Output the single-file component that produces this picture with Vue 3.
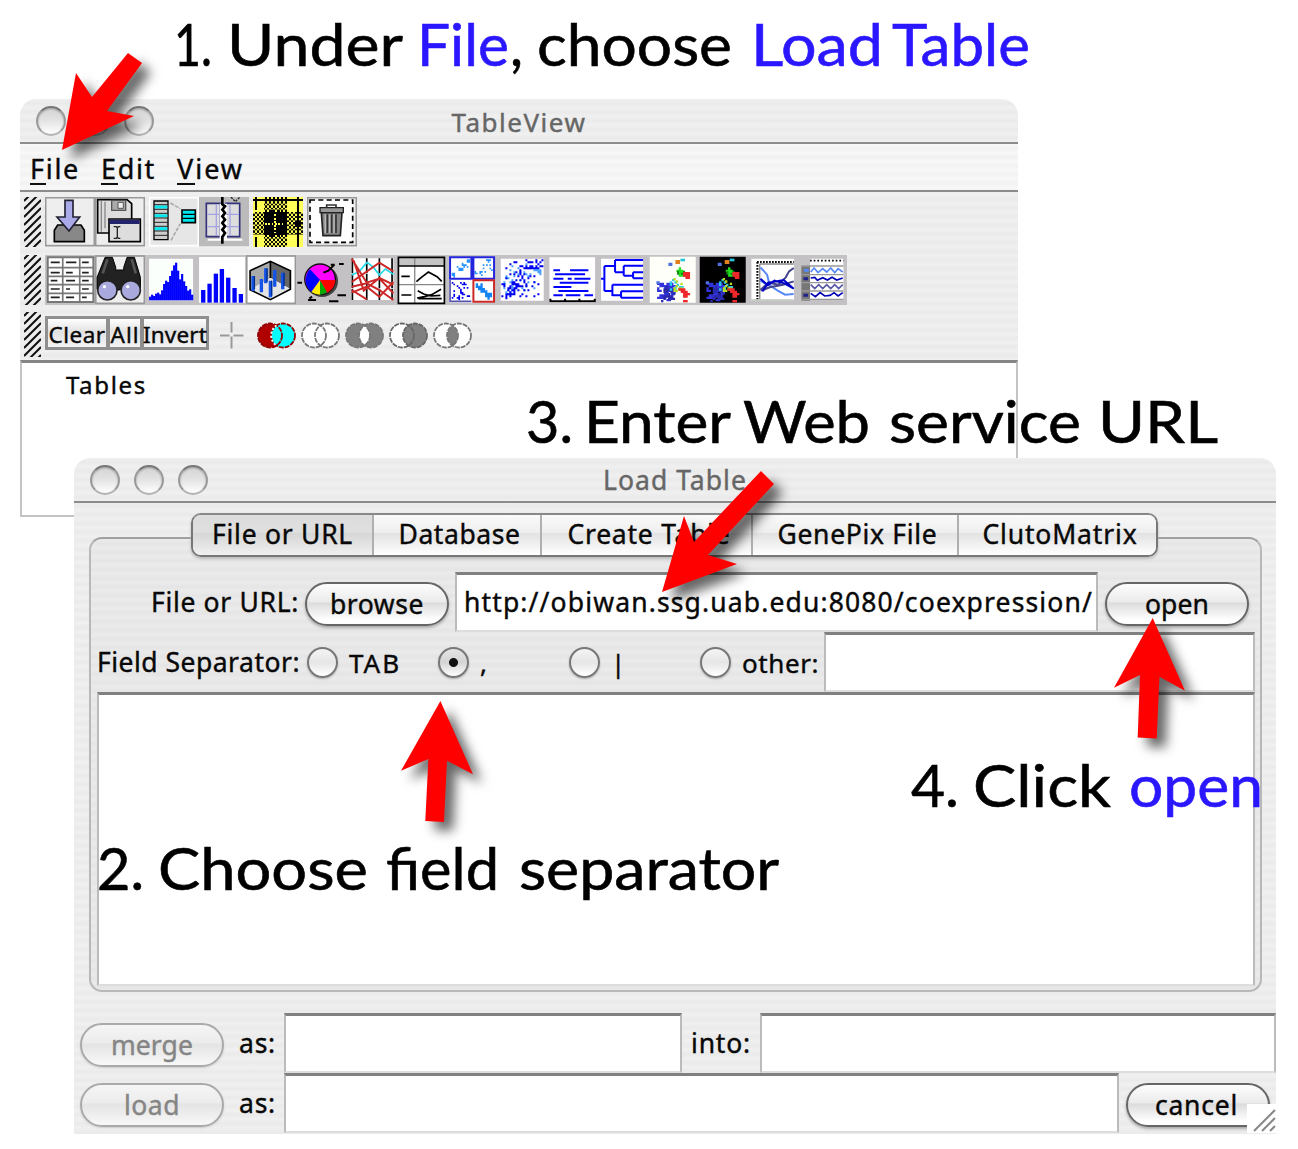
<script setup>
// Spreads the letters of a label so that it fills the given width.
const vFit = {
  mounted(el, { value }) {
    const natural = el.getBoundingClientRect().width
    const n = el.textContent.length
    el.style.letterSpacing = ((value - natural) / n).toFixed(3) + 'px'
  },
}

const tabs = [
  { label: 'File or URL', width: 179, text: 141, active: true },
  { label: 'Database', width: 168, text: 122 },
  { label: 'Create Table', width: 211, text: 163 },
  { label: 'GenePix File', width: 206, text: 160 },
  { label: 'ClutoMatrix', width: 199, text: 155 },
]

const captions = [
  { y: 66, words: [['1.', 174, 38], ['Under', 227, 176], ['File', 417, 92, 1], [',', 510, 13], ['choose', 537, 195], ['Load', 751, 132, 1], ['Table', 892, 138, 1]] },
  { y: 443, words: [['3.', 526, 47], ['Enter', 584, 147], ['Web', 743, 127], ['service', 889, 192], ['URL', 1098, 120]] },
  { y: 890, words: [['2.', 97, 47], ['Choose', 158, 210], ['field', 386, 113], ['separator', 519, 260]] },
  { y: 807, words: [['4.', 911, 48], ['Click', 973, 138], ['open', 1129, 134, 1]] },
]

const arrows = [
  '62,150 76,73 92,97 128,53 142,63 107,111 134,116',
  '662,592 684,516 694,542 761,471 774,484 708,555 737,564',
  '440.4,701 401,770.7 428.4,759 425.3,821 444,822 447,760.7 473,774.3',
  '1152.7,618 1114,687.7 1140,675 1137.7,737.5 1156.7,738.5 1159.5,676.7 1185,690.7',
]

function hatch(height) {
  let d = ''
  for (let y = 4; y < height + 16; y += 8) d += `M0 ${y}L17 ${y - 17}`
  return d
}

let seed = 11
const rnd = () => {
  seed = (seed * 16807) % 2147483647
  return seed / 2147483647
}
function dots(n, x, y, w, h, diagonal, size = 6) {
  let d = ''
  for (let i = 0; i < n; i++) {
    const a = rnd()
    let b = rnd()
    if (diagonal) {
      b = (diagonal > 0 ? 1 - a : a) + (rnd() + rnd() - 1) * Math.abs(diagonal)
      if (b < 0 || b > 1) continue
    }
    const px = x + Math.round((a * (w - size)) / size) * size
    const py = y + Math.round((b * (h - size)) / size) * size
    d += `M${px} ${py}h${size}v${size}h${-size}z`
  }
  return d
}
const scatterA = dots(30, 484, 28, 56, 54, 0.3, 5)
const scatterB = dots(32, 552, 28, 56, 54, 0.7, 5)
const scatterC = dots(34, 484, 96, 56, 54, 0, 5)
const scatterD = dots(80, 556, 100, 48, 46, -0.35, 7)
const cloudDark = dots(150, 634, 28, 126, 120, 0.8, 6)
const cloudLight = dots(60, 634, 28, 126, 120, 0.7, 6)
const blobs = [
  ['#3333dd', dots(75, 274, 98, 56, 54, 0, 7)],
  ['#2a2aae', dots(25, 286, 108, 42, 48, 0, 7)],
  ['#28c8e8', dots(17, 312, 80, 42, 44, 0, 7)],
  ['#b8dc20', dots(12, 316, 84, 36, 46, 0, 7)],
  ['#22e022', dots(24, 332, 52, 28, 30, 0, 7)],
  ['#128a12', dots(6, 334, 62, 26, 22, 0, 6)],
  ['#ee2828', dots(13, 352, 66, 24, 22, 0, 7)],
  ['#ee2828', dots(24, 338, 108, 34, 34, -0.5, 7)],
  ['#e08020', 'M329 30h14v12h-14z'],
  ['#28c8d8', 'M344 26h14v8h-14z'],
  ['#5070dd', 'M308 38h12v10h-12zM272 94h10v8h-10z'],
  ['#ee2828', 'M352 150h14v7h-14z'],
]
const bars = [[402, 140], [408, 134], [414, 138], [420, 131], [426, 128], [432, 133], [438, 121], [444, 102], [450, 92], [456, 96], [462, 78], [468, 62], [474, 46], [480, 38], [486, 62], [492, 88], [498, 72], [504, 94], [510, 108], [516, 122], [522, 118], [528, 134]]
const columns = [[558, 120], [577, 101], [596, 71], [614, 57], [633, 83], [652, 114], [671, 132]]
const venns = [
  { l: '#b00000', r: '#00ffff', m: '#00ffff', s: '#900000' },
  { l: '#fff', r: '#fff', m: '#fff', s: '#777' },
  { l: '#808080', r: '#808080', m: '#fff', s: '#777' },
  { l: '#fff', r: '#808080', m: '#808080', s: '#666' },
  { l: '#fff', r: '#fff', m: '#808080', s: '#777' },
]
</script>

<template>
  <main class="desktop">
    <section class="window tableview">
      <header class="titlebar">
        <div class="lights"><i></i><i></i><i></i></div>
        <span v-fit="135" class="title">TableView</span>
      </header>
      <nav class="menubar">
        <span v-fit="50"><u>F</u>ile</span>
        <span v-fit="55"><u>E</u>dit</span>
        <span v-fit="67"><u>V</u>iew</span>
      </nav>
      <div class="tools first">
        <svg class="grip" width="17" height="50"><path :d="hatch(50)" /></svg>
        <svg class="ico" viewBox="90 20 150 150">
          <rect x="92" y="22" width="146" height="144" fill="#eee" stroke="#999" stroke-width="5" />
          <path d="M128 104h70l10 16v34h-90v-34z" fill="#888" stroke="#000" stroke-width="5" />
          <path d="M150 30h24v50h20l-32 42-36-42h24z" fill="#aaaae8" stroke="#223" stroke-width="5" />
        </svg>
        <svg class="ico" viewBox="240 20 150 150">
          <rect x="242" y="22" width="146" height="144" fill="#eee" stroke="#999" stroke-width="5" />
          <path d="M248 28h88l14 12v88h-102z" fill="#ddd" stroke="#000" stroke-width="5" />
          <path d="M259 32v92M270 34v80" stroke="#888" stroke-width="4" />
          <path d="M290 30h42v30h-42z" fill="#aaa" stroke="#555" stroke-width="4" />
          <path d="M309 36h16v18h-16z" fill="#eee" stroke="#555" stroke-width="3" />
          <path d="M282 86h94v68h-94z" fill="#ddd" stroke="#000" stroke-width="5" />
          <path d="M284 88h90v13h-90z" fill="#23236b" />
          <path d="M296 109h8l3 4 3-4h6M307 113v26M296 144h8l3-4 3 4h6" fill="none" stroke="#222" stroke-width="4" />
        </svg>
        <svg class="ico gap" viewBox="400 20 150 150">
          <rect x="402" y="22" width="146" height="144" fill="#e6e6e6" stroke="#fff" stroke-width="5" />
          <path d="M415 32h42v116h-42z" fill="#ccc" stroke="#000" stroke-width="4" />
          <path d="M417 50h38M417 76h38M417 115h38" stroke="#00e8ee" stroke-width="9" />
          <path d="M415 43h42M415 57h42M415 69h42M415 83h42M415 96h42M415 108h42M415 122h42M415 135h42" stroke="#222" stroke-width="3" />
          <path d="M499 59h40v38h-40z" fill="#00e8ee" stroke="#000" stroke-width="5" />
          <path d="M499 72h40M499 84h40" stroke="#000" stroke-width="4" />
          <path d="M464 38l30 17M466 150l28-50" stroke="#aaa" stroke-width="5" stroke-dasharray="12 4" />
        </svg>
        <svg class="ico" viewBox="552 20 150 150">
          <path d="M552 20h150v148h-150z" fill="#bbb" />
          <path d="M574 39h42v100h-42zM632 39h42v100h-42z" fill="#ddd" stroke="#33337c" stroke-width="5" />
          <path d="M614 40h22v105h-22z" fill="#fff" />
          <path d="M578 145h104v6h-104z" fill="#fff" />
          <path d="M604 42v95M645 42v95M577 72h36M577 109h36M634 72h38M634 109h38" stroke="#a4a4e4" stroke-width="4" />
          <path d="M622 20v22l8 6-8 10 8 10-8 10 8 10-8 10 8 10-8 10 8 10-8 12v20" fill="none" stroke="#000" stroke-width="8" />
          <path d="M648 20l13 14 14-14" fill="none" stroke="#222" stroke-width="4" stroke-dasharray="7 3" />
        </svg>
        <svg class="ico gap" viewBox="714 20 150 144" preserveAspectRatio="none" shape-rendering="crispEdges">
          <defs>
            <pattern id="weave" x="714" y="20" width="12" height="12" patternUnits="userSpaceOnUse">
              <path d="M0 0h6v6h6v6h-6v-6h-6z" />
            </pattern>
          </defs>
          <path d="M714 20h150v144h-150z" fill="#ffff5a" />
          <path d="M714 64h150v66h-150zM746 20h70v144h-70z" fill="url(#weave)" />
          <path d="M746 64h22v-6h8v6h10v-6h8v6h22v66h-22v6h-8v-6h-10v6h-8v-6h-22z" />
          <path d="M714 28h150M722 20v36M722 134v30M849 20v144" stroke="#000" stroke-width="6" />
          <path d="M839 88h18v18h-18z" />
          <path d="M750 97h60M780 70v56" stroke="#ffff5a" stroke-width="5" stroke-dasharray="5 5" />
        </svg>
        <svg class="ico gap" viewBox="877 20 150 150">
          <rect x="879" y="22" width="146" height="144" fill="#eee" stroke="#999" stroke-width="5" />
          <rect x="886" y="29" width="128" height="127" fill="#fff" stroke="#000" stroke-width="5" stroke-dasharray="15 10" />
          <path d="M920 66h62l-5 70h-52z" fill="#888" stroke="#222" stroke-width="5" />
          <path d="M916 52h70v15h-70z" fill="#999" stroke="#222" stroke-width="4" />
          <path d="M936 52v-8h28v8M938 72v56M951 72v56M964 72v56" fill="none" stroke="#333" stroke-width="5" />
          <path d="M932 72v56M945 72v56M958 72v56" stroke="#bbb" stroke-width="4" />
        </svg>
      </div>

      <div class="tools second">
        <svg class="grip" width="17" height="50"><path :d="hatch(50)" /></svg>
        <div class="strip">
          <svg viewBox="90 15 150 150">
            <path d="M98 22h137v134h-137z" fill="#fff" stroke="#777" stroke-width="6" />
            <path d="M143 22v134M194 22v134M98 53h137M98 79h137M98 104h137M98 130h137" stroke="#777" stroke-width="5" />
            <path d="M107 37h27M153 37h31M201 37h20M107 68h27M153 68h20M201 68h20M107 92h20M153 92h27M201 92h20M107 117h27M153 117h12M201 117h20M107 142h27M153 142h24M201 142h14" stroke="#222" stroke-width="5" />
          </svg>
          <svg viewBox="240 15 150 150">
            <rect x="242" y="18" width="146" height="142" fill="#eee" stroke="#999" stroke-width="5" />
            <path d="M270 22h22l10 30v8h24v-8l10-30h22l18 60v36l-16-8h-36l-10 10h-14l-10-10h-30l-14 8v-36z" fill="#222" stroke="#000" stroke-width="3" />
            <path d="M263 70l14-42M350 28l12 42" stroke="#555" stroke-width="8" />
            <circle cx="277" cy="121" r="29" fill="#a9a9de" stroke="#222" stroke-width="5" />
            <circle cx="347" cy="121" r="29" fill="#a9a9de" stroke="#222" stroke-width="5" />
            <circle cx="268" cy="110" r="5" fill="#fff" /><circle cx="338" cy="110" r="5" fill="#fff" />
          </svg>
          <svg viewBox="390 15 150 150">
            <path d="M402 26h132v126h-132z" fill="#fbfffb" />
            <path v-for="b in bars" :key="b[0]" :d="`M${b[0]} ${b[1]}h6.5V151h-6.5z`" fill="#00f" />
          </svg>
          <svg viewBox="540 15 150 150">
            <path d="M552 21h138v137h-138z" fill="#fff" />
            <path v-for="b in columns" :key="b[0]" :d="`M${b[0]} ${b[1]}h13V158h-13z`" fill="#00f" />
          </svg>
          <svg viewBox="698 15 150 150">
            <rect x="700" y="18" width="146" height="142" fill="#fff" stroke="#999" stroke-width="5" />
            <path d="M710 62l61-28v50l-61 35z" fill="#aaa" /><path d="M771 34l60 28v55l-60-33z" fill="#666" />
            <path d="M710 119l61-35 60 33-60 32z" fill="#e4e4e4" />
            <path d="M710 62l61-28 60 28v56l-60 31-61-30zM771 34v50" fill="none" stroke="#000" stroke-width="5" />
            <path d="M719 78v45M757 55v45M744 87v40M784 60v50M808 68v50M771 92v50" stroke="#1454e8" stroke-width="10" />
            <path d="M723 78v40M761 55v40M775 92v45M812 68v40" stroke="#002c8c" stroke-width="4" />
          </svg>
          <svg viewBox="16 15 150 150">
            <circle cx="94" cy="93" r="48" fill="#444" />
            <circle cx="88" cy="88" r="46" fill="#f0f" stroke="#111" stroke-width="4" />
            <path d="M88 90L58 58a46 46 0 0 0 4 68z" fill="#00f" />
            <path d="M88 90l-26 36a46 46 0 0 0 26 8z" fill="#fe0" /><path d="M88 90v44a46 46 0 0 0 22-8z" fill="#0a0" />
            <path d="M88 90l22 38a46 46 0 0 0 24-38z" fill="#f00" />
            <path d="M20 98h14M145 42h14M120 44h12M52 150h24M115 154h28M140 136h26M98 68l15-6 18-18M56 146l8-6" fill="none" stroke="#000" stroke-width="6" />
          </svg>
          <svg viewBox="167 15 150 150">
            <path d="M182 25h127v125h-127z" fill="#fff" />
            <path d="M186 25v125M229 25v125M267 25v125M305 25v125" stroke="#000" stroke-width="5" stroke-dasharray="44 2" />
            <path d="M184 75l22-10 24-28 20 16 17 22 18-18 24 16" fill="none" stroke="#20d8e8" stroke-width="5" />
            <path d="M184 26l45 72 38-12 42 44M184 96l83-58 42 26M190 32l30 90 47-38 42 20M184 110l45-10 38 20 42 30M184 128l45-18 38 30 42-44M184 120l45 28" fill="none" stroke="#cc2828" stroke-width="6" />
          </svg>
          <svg viewBox="317 15 150 150">
            <path d="M324 22h138v138h-138z" fill="#fff" /><path d="M324 22h138v25h-138z" fill="#c4c4c4" />
            <path d="M373 22v138M324 104h138" stroke="#888" stroke-width="4" />
            <path d="M324 22h138v138h-138zM324 48h138M333 79h25M333 135h30" fill="none" stroke="#000" stroke-width="5" />
            <path d="M378 95l14-12 22-17 26 14 14 14M382 122l18 10 22 6 28-2 M380 144l22-4 22-6 28-16M384 146h70" fill="none" stroke="#000" stroke-width="5" />
          </svg>
          <svg viewBox="467 15 150 150">
            <path d="M476 20h137v138h-137z" fill="#fff" />
            <path :d="scatterA" fill="#2892ff" /><path :d="scatterB" fill="#2892ff" /><path :d="scatterC" fill="#00e" /><path :d="scatterD" fill="#1484f4" />
            <path d="M479 90v64h64" fill="none" stroke="#5555aa" stroke-width="5" />
            <path d="M479 22h64v64h-64zM549 22h62v64h-62z" fill="none" stroke="#2424dd" stroke-width="6" />
            <path d="M549 91h62v64h-62z" fill="none" stroke="#cc2828" stroke-width="6" />
          </svg>
          <svg viewBox="618 15 150 150">
            <path d="M632 26h129v126h-129z" fill="#fff" /><path :d="cloudLight" fill="#45a0ff" /><path :d="cloudDark" fill="#0000f0" />
          </svg>
          <svg viewBox="-57 15 150 150">
            <path d="M-47 22h137v136h-137z" fill="#fff" />
            <path d="M-35 61h20M15 61h55M-30 73h90M-35 86h30M8 86h12M28 86h48M-16 98h86M-35 111h54M-20 123h90M-35 136h28M2 136h44M58 136h26" stroke="#00f" stroke-width="6" />
            <path d="M-47 154h136v-8M-44 146v8M0 146v8M43 146v8" fill="none" stroke="#000" stroke-width="6" />
          </svg>
          <svg viewBox="93 15 150 150">
            <path d="M108 26h126v126h-126z" fill="#fff" />
            <path d="M108 86h10M118 48v75M118 48h32M150 30v37M150 30h84M150 67h26M176 47v30M176 47h58M176 77h28M204 67v18M204 67h30M204 85h30M118 123h24M142 104v34M142 104h92M142 136h26M168 124v19M168 124h66M168 143h66" fill="none" stroke="#00f" stroke-width="6" />
          </svg>
          <svg viewBox="244 15 150 150">
            <path d="M252 20h138v138h-138z" fill="#fffffa" />
            <path v-for="(b, i) in blobs" :key="i" :d="b[1]" :fill="b[0]" />
          </svg>
          <svg viewBox="394 15 150 150">
            <path d="M402 20h138v138h-138z" />
            <g transform="translate(148 0)"><path v-for="(b, i) in blobs" :key="i" :d="b[1]" :fill="b[0]" /></g>
          </svg>
          <svg viewBox="544 15 150 150">
            <path d="M557 26h128v126h-128z" fill="#fff" /><path d="M582 42h102M582 42v106" stroke="#888" stroke-width="4" />
            <path d="M574 36h110M575 36v112" stroke="#000" stroke-width="6" stroke-dasharray="5 4" />
            <path d="M584 52l20 22 8 32 24 16 22 12 26-2M584 92l20 12" fill="none" stroke="#5888f8" stroke-width="6" />
            <path d="M584 120l24-22 30 6 22-22 10-18 14-10M586 122l26-10 40-8 32-10" fill="none" stroke="#44448c" stroke-width="6" />
            <path d="M584 86l22 20 20-14 30 8 28 16M590 124l18-26 46-8 30 26" fill="none" stroke="#0000c8" stroke-width="6" />
            <path d="M557 150h127" stroke="#9aaa9a" stroke-width="3" />
          </svg>
          <svg viewBox="695 15 150 150">
            <path d="M734 26h100v124h-100z" fill="#fff" /><path d="M708 48h26v104h-26z" fill="#777" />
            <path d="M716 61h14" stroke="#5888f8" stroke-width="9" /><path d="M714 86h14M714 136h14" stroke="#22228c" stroke-width="9" />
            <path d="M734 32h100" stroke="#000" stroke-width="5" stroke-dasharray="5 6" />
            <path d="M708 48h126M708 74h126M708 98h126M708 123h126M708 148h126" stroke="#999" stroke-width="4" />
            <path d="M736 66l10-12 12 14 14-12 12 10 12-12 12 14 10-12 14 10" fill="none" stroke="#5888f8" stroke-width="5" />
            <path d="M736 84l12-2 8 9 16-8 14 7 14-8 14 8 18-6M736 130l14 10 14-12 14 10 16-2 12-8 12 10 14-10" fill="none" stroke="#0000b8" stroke-width="5" />
            <path d="M736 104l12 12 12-12 12 12 12-12 12 12 12-12 12 12 12-12" fill="none" stroke="#5858a4" stroke-width="5" />
          </svg>
        </div>
      </div>

      <div class="tools third">
        <svg class="grip" width="17" height="45"><path :d="hatch(45)" /></svg>
        <div class="textbtns">
          <span style="width: 64px"><b v-fit="57">Clear</b></span>
          <span style="width: 36px"><b v-fit="29">All</b></span>
          <span style="width: 68px"><b v-fit="64">Invert</b></span>
        </div>
        <svg class="cross" width="24" height="27"><path d="M0 13.500h9.500M13.500 13.500h10M11.500 0v10.500M11.500 14.500v12" /></svg>
        <div class="venns">
          <svg v-for="(v, i) in venns" :key="i" width="39" height="27" viewBox="0 0 39 27">
            <circle cx="13" cy="13.500" r="12" :fill="v.l" /><circle cx="26" cy="13.500" r="12" :fill="v.r" />
            <path d="M19.500 3.500a12 12 0 0 1 0 20a12 12 0 0 1 0-20" :fill="v.m" />
            <g fill="none" :stroke="v.s" stroke-width="1.800" stroke-dasharray="5 1">
              <circle cx="26" cy="13.500" r="12" /><circle cx="13" cy="13.500" r="12" />
            </g>
            <path v-if="i === 0" d="M19.500 3.500a12 12 0 0 0 0 20" fill="none" stroke="#fff" stroke-width="1.800" stroke-dasharray="2 2" />
          </svg>
        </div>
      </div>
      <div class="tree"><span v-fit="81">Tables</span></div>
    </section>

    <section class="window loadtable">
      <header class="titlebar">
        <div class="lights"><i></i><i></i><i></i></div>
        <span v-fit="144" class="title">Load Table</span>
      </header>
      <div class="tabs">
        <div v-for="t in tabs" :key="t.label" class="tab" :class="{ active: t.active }" :style="{ width: t.width + 'px' }">
          <span v-fit="t.text">{{ t.label }}</span>
        </div>
      </div>
      <div class="panel">
        <div class="row">
          <label class="lead"><span v-fit="148">File or URL:</span></label>
          <div class="pill"><span v-fit="94">browse</span></div>
          <div class="field url"><span v-fit="629">http://obiwan.ssg.uab.edu:8080/coexpression/</span></div>
          <div class="pill"><span v-fit="64">open</span></div>
        </div>
        <div class="row">
          <label class="lead"><span v-fit="203">Field Separator:</span></label>
          <div class="radio" style="width: 131px"><i></i><span v-fit="52">TAB</span></div>
          <div class="radio" style="width: 131px"><i class="on"></i><span>,</span></div>
          <div class="radio" style="width: 131px"><i></i><span>|</span></div>
          <div class="radio last"><i></i><span v-fit="77">other:</span></div>
          <div class="field other"></div>
        </div>
        <div class="preview"></div>
      </div>
      <div class="footer">
        <div class="row">
          <div class="pill off"><span v-fit="82">merge</span></div>
          <label class="as"><span v-fit="37">as:</span></label>
          <div class="field" style="width: 398px"></div>
          <label class="into"><span v-fit="60">into:</span></label>
          <div class="field grow"></div>
        </div>
        <div class="row">
          <div class="pill off"><span v-fit="56">load</span></div>
          <label class="as"><span v-fit="37">as:</span></label>
          <div class="field" style="width: 835px"></div>
          <div class="pill cancel"><span v-fit="83">cancel</span></div>
        </div>
      </div>
      <svg class="resize" width="29" height="29"><path d="M7 27L28 6M15 27l13-13M23 27l5-5" /></svg>
    </section>

    <svg class="notes" width="1298" height="1149">
      <polygon v-for="a in arrows" :key="a" :points="a" />
      <text v-for="c in captions" :key="c.y">
        <tspan v-for="w in c.words" :key="w[1]" :x="w[1]" :y="c.y" :textLength="w[2]" lengthAdjust="spacingAndGlyphs" :class="{ key: w[3] }">{{ w[0] }}</tspan>
      </text>
    </svg>
  </main>
</template>

<style>
body { background: #fff; }
</style>

<style scoped>
* { box-sizing: border-box; }
.desktop { position: relative; width: 1298px; height: 1149px; overflow: hidden; font: 26.5px/36px "Noto Sans", "Open Sans", sans-serif; color: #080808; white-space: nowrap; }
.window {
  position: absolute; display: flex; flex-direction: column; border-radius: 16px 16px 0 0; overflow: hidden;
  background: repeating-linear-gradient(#f0f0f0 0, #eaeaea 4.350px, #f0f0f0 8.700px);
  -webkit-text-stroke: .4px currentColor;
}
.tableview { left: 20px; top: 99px; width: 998px; height: 418px; }
.loadtable { left: 74px; top: 458px; width: 1202px; height: 676px; }
.titlebar { position: relative; height: 45px; flex: none; border-bottom: 2px solid #8c8c8c; display: flex; align-items: center; justify-content: center; color: #666; }
.title { line-height: 40px; font-size: 26px; padding-top: 2px; }
.loadtable .title { padding: 0; font-size: 26.5px; }
.lights { position: absolute; left: 16px; top: 7px; display: flex; gap: 14px; }
.lights i { width: 30px; height: 30px; border-radius: 50%; border: 2px solid #999; border-top-color: #777; border-bottom-color: #b4b4b4; background: linear-gradient(#d4d4d4, #e2e2e2 45%, #fff); box-shadow: inset 0 1px 2px #999; }
.menubar { height: 48px; flex: none; border-bottom: 2px solid #8c8c8c; background: repeating-linear-gradient(#f8f8f8 0, #f2f2f2 4.350px, #f8f8f8 8.700px); display: flex; gap: 21px; padding: 7px 10px; font-size: 27px; }
.menubar u { text-decoration: none; border-bottom: 2px solid #111; display: inline-block; line-height: 27px; height: 30px; }
.tools { display: flex; flex: none; padding-left: 4px; }
.grip { margin-right: 4px; flex: none; }
.grip path { stroke: #111; stroke-width: 2; fill: none; }
.first { height: 59px; padding-top: 5px; }
.ico { width: 50px; height: 50px; flex: none; }
.gap { margin-left: 4px; }
.second { height: 58px; padding-top: 4px; }
.strip { display: flex; background: #c4c1c4; height: 50px; width: 802px; }
.strip svg { flex: 1 1 0; min-width: 0; height: 50px; }
.third { height: 51px; padding-top: 3px; }
.textbtns { display: flex; margin-top: 4px; height: 34px; }
.textbtns span { border: 3px solid #8f8f8f; background: linear-gradient(#fff, #e2e2e2 45%, #f4f4f4); line-height: 32px; font-size: 22.5px; display: flex; justify-content: center; }
.textbtns span + span { margin-left: -2px; }
.textbtns b { font-weight: 400; }
.cross { margin: 10px 13px 0 11px; }
.cross path { stroke: #999; stroke-width: 2; }
.venns { display: flex; gap: 5px; margin-top: 10px; }
.tree { flex: 1; background: #fff; border: 2px solid #c4c4c4; border-top: 3px solid #858585; padding: 4px 44px; font-size: 24px; }

.tabs { position: relative; z-index: 1; display: flex; margin: 10px 0 0 117px; width: 967px; height: 44px; border: 2px solid #777; border-top-color: #888; border-radius: 10px; overflow: hidden; box-shadow: 0 2px 3px #bbb; flex: none; }
.tab { background: linear-gradient(#fafafa, #eee 45%, #e2e2e2 46%, #fff); text-align: center; line-height: 39px; padding-left: 5px; flex: none; }
.tab + .tab { border-left: 2px solid #b0b0b0; }
.tab:last-child { flex: 1; }
.tab.active { padding-left: 0; background: linear-gradient(#dcdcdc, #dfdfdf 45%, #d6d6d6 46%, #f0f0f0); }
.panel { margin: -20px 0 0 15px; width: 1173px; height: 455px; padding: 33px 5px 0 6px; border: 2px solid #b8b8b8; border-top-color: #a0a0a0; border-radius: 13px; background: repeating-linear-gradient(#ebebeb 0, #e5e5e5 4.350px, #ebebeb 8.700px); flex: none; }
.row { display: flex; height: 60px; }
.lead { width: 208px; padding: 12px 6px 0 0; text-align: right; }
.pill { width: 144px; height: 44px; margin-top: 10px; border: 2px solid #666; border-radius: 22px; background: linear-gradient(#fdfdfd, #ebebeb 44%, #dcdcdc 48%, #fff 90%); box-shadow: 0 2px 3px #aaa; text-align: center; line-height: 40px; flex: none; }
.pill.off { border-color: #aaa; color: #858585; background: linear-gradient(#f5f5f5, #ececec 44%, #e4e4e4 48%, #f8f8f8); box-shadow: 0 1px 2px #ccc; }
.field { height: 60px; background: #fff; border: 2px solid #bbb; border-top: 3px solid #808080; border-bottom-color: #ddd; flex: none; }
.url { width: 643px; margin: 0 7px 0 6px; padding: 9px 7px; overflow: hidden; }
.radio { display: flex; padding: 15px 0 0 2px; flex: none; }
.radio i { width: 31px; height: 31px; flex: none; margin-right: 11px; border: 2px solid #777; border-radius: 50%; background: linear-gradient(#f4f4f4, #e6e6e6 50%, #fff); box-shadow: 0 1px 2px #aaa; }
.radio i.on { background: radial-gradient(circle, #111 0 4px, transparent 5px), linear-gradient(#e4e4e4, #d4d4d4 50%, #fff); }
.radio span { line-height: 32px; font-size: 26px; }
.radio.last { width: 126px; }
.other { flex: 1; }
.preview { height: 294px; background: #fff; border: 2px solid #bbb; border-top: 3px solid #808080; border-bottom-color: #ddd; }
.footer { margin: 21px 0 0 6px; }
.as { width: 60px; padding: 12px 0 0 15px; }
.into { width: 78px; padding: 12px 0 0 9px; }
.grow { flex: 1; }
.cancel { margin-left: 7px; padding-right: 3px; }
.resize { position: absolute; right: 0; bottom: 1px; background: #fff; }
.resize path { stroke: #888; stroke-width: 2; }
.notes { position: absolute; z-index: 5; left: 0; top: 0; }
.notes polygon { fill: #f00; filter: drop-shadow(9px 9px 6px rgba(0, 0, 0, .6)); }
.notes text { font: 58px Lato, sans-serif; fill: #000; stroke: #000; stroke-width: .6px; }
.notes .key { fill: #2a17ff; stroke: #2a17ff; }
</style>
